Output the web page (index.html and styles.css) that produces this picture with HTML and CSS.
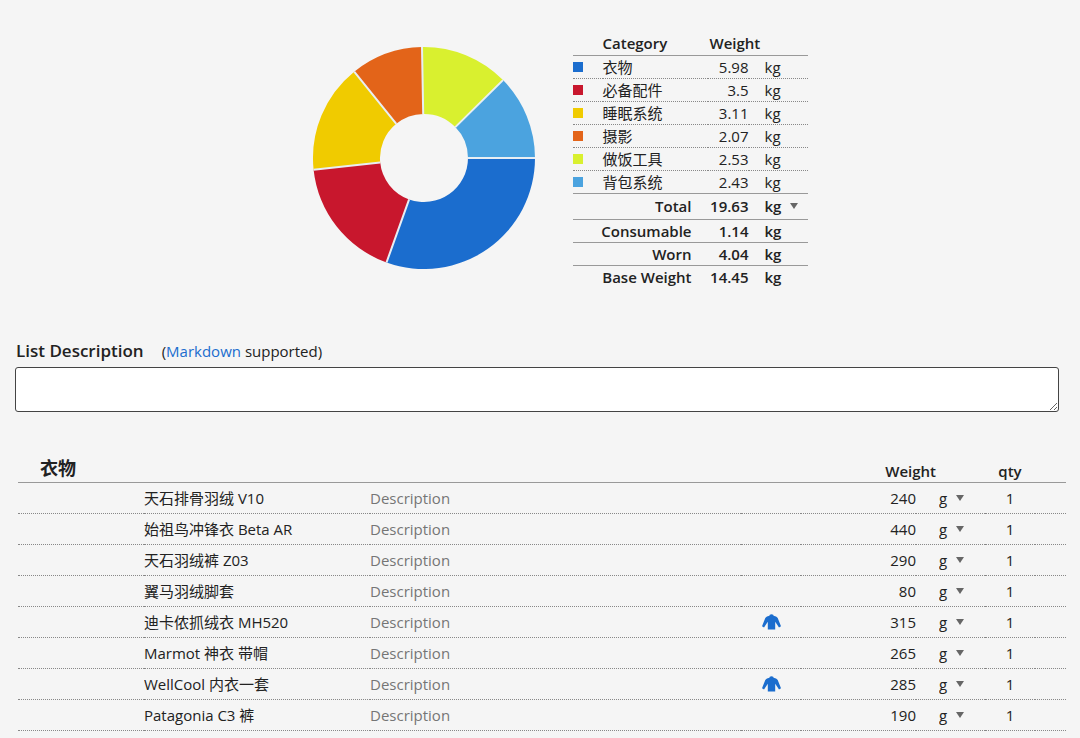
FILE: index.html
```
<!DOCTYPE html>
<html lang="zh-CN">
<head>
    <meta charset="utf-8">
    <title>衣物</title>
    <meta name="viewport" content="width=device-width, initial-scale=1">
    <link rel="stylesheet" href="styles.css">
</head>
<body>
<svg width="0" height="0" class="defs" aria-hidden="true">
    <symbol id="shirt" viewBox="0 0 19 16">
        <path d="M7.8.8Q9.5-.3 11.2.8L11.6 1.7 14 2.5Q15.1 3 15.7 4.1L19 12.3 17 13.6 13.2 7.8V15.5H5.8V7.8L2 13.6 0 12.3 3.3 4.1Q3.9 3 5 2.5L7.4 1.7Z"/>
    </symbol>
</svg>
<div class="summary">
    <svg class="chart" width="224" height="224" viewBox="0 0 224 224" role="img" aria-label="Weight by category">
        <path fill="#1b6dce" d="M223 112A111 111 0 0 1 74.5 216.5L97.1 153.4A44 44 0 0 0 156 112Z"/>
        <path fill="#c8172d" d="M74.5 216.5A111 111 0 0 1 1.6 123.7L68.2 116.6A44 44 0 0 0 97.1 153.4Z"/>
        <path fill="#f0cb00" d="M1.6 123.7A111 111 0 0 1 42.2 25.7L84.3 77.8A44 44 0 0 0 68.2 116.6Z"/>
        <path fill="#e36419" d="M42.2 25.7A111 111 0 0 1 110 1L111.2 68A44 44 0 0 0 84.3 77.8Z"/>
        <path fill="#d9f02f" d="M110 1A111 111 0 0 1 191 34.1L143.3 81.1A44 44 0 0 0 111.2 68Z"/>
        <path fill="#4ba3df" d="M191 34.1A111 111 0 0 1 223 112L156 112A44 44 0 0 0 143.3 81.1Z"/>
        <path class="gaps" d="M223 112H156M74.5 216.5L97.1 153.4M1.6 123.7L68.2 116.6M42.2 25.7L84.3 77.8M110 1L111.2 68M191 34.1L143.3 81.1"/>
    </svg>
    <table class="totals">
        <colgroup>
            <col class="c-key"><col><col class="c-num"><col class="c-kg">
        </colgroup>
        <thead>
        <tr><th></th><th>Category</th><th colspan="2" class="head">Weight</th></tr>
        </thead>
        <tbody>
        <tr><td><span class="swatch blue"></span></td><td>衣物</td><td class="num">5.98</td><td class="unit">kg</td></tr>
        <tr><td><span class="swatch red"></span></td><td>必备配件</td><td class="num">3.5</td><td class="unit">kg</td></tr>
        <tr><td><span class="swatch yellow"></span></td><td>睡眠系统</td><td class="num">3.11</td><td class="unit">kg</td></tr>
        <tr><td><span class="swatch orange"></span></td><td>摄影</td><td class="num">2.07</td><td class="unit">kg</td></tr>
        <tr><td><span class="swatch lime"></span></td><td>做饭工具</td><td class="num">2.53</td><td class="unit">kg</td></tr>
        <tr><td><span class="swatch sky"></span></td><td>背包系统</td><td class="num">2.43</td><td class="unit">kg</td></tr>
        </tbody>
        <tfoot>
        <tr class="total"><th colspan="2">Total</th><td class="num">19.63</td><td class="unit"><span class="picker"><select aria-label="Total unit"><option>kg</option></select></span></td></tr>
        <tr><th colspan="2">Consumable</th><td class="num">1.14</td><td class="unit">kg</td></tr>
        <tr><th colspan="2">Worn</th><td class="num">4.04</td><td class="unit">kg</td></tr>
        <tr><th colspan="2">Base Weight</th><td class="num">14.45</td><td class="unit">kg</td></tr>
        </tfoot>
    </table>
</div>

<div class="description">
    <div class="caption">
        <label for="list-description">List Description</label>
        <span>(<a href="#markdown">Markdown</a> supported)</span>
    </div>
    <textarea id="list-description"></textarea>
</div>

<table class="items">
    <colgroup>
        <col class="c-handle"><col class="c-name"><col><col class="c-worn"><col class="c-weight"><col class="c-unit"><col class="c-qty"><col class="c-end">
    </colgroup>
    <thead>
    <tr><th colspan="4"><h2>衣物</h2></th><th colspan="2" class="weight">Weight</th><th class="qty">qty</th><th></th></tr>
    </thead>
    <tbody>
    <tr>
        <td></td>
        <td><input type="text" aria-label="Name" value="天石排骨羽绒 V10"></td>
        <td><input type="text" aria-label="Description" placeholder="Description"></td>
        <td></td>
        <td><input type="text" class="right" aria-label="Weight" value="240"></td>
        <td><span class="picker"><select aria-label="Unit"><option>g</option></select></span></td>
        <td><input type="text" class="center" aria-label="qty" value="1"></td>
        <td></td>
    </tr>
    <tr>
        <td></td>
        <td><input type="text" aria-label="Name" value="始祖鸟冲锋衣 Beta AR"></td>
        <td><input type="text" aria-label="Description" placeholder="Description"></td>
        <td></td>
        <td><input type="text" class="right" aria-label="Weight" value="440"></td>
        <td><span class="picker"><select aria-label="Unit"><option>g</option></select></span></td>
        <td><input type="text" class="center" aria-label="qty" value="1"></td>
        <td></td>
    </tr>
    <tr>
        <td></td>
        <td><input type="text" aria-label="Name" value="天石羽绒裤 Z03"></td>
        <td><input type="text" aria-label="Description" placeholder="Description"></td>
        <td></td>
        <td><input type="text" class="right" aria-label="Weight" value="290"></td>
        <td><span class="picker"><select aria-label="Unit"><option>g</option></select></span></td>
        <td><input type="text" class="center" aria-label="qty" value="1"></td>
        <td></td>
    </tr>
    <tr>
        <td></td>
        <td><input type="text" aria-label="Name" value="翼马羽绒脚套"></td>
        <td><input type="text" aria-label="Description" placeholder="Description"></td>
        <td></td>
        <td><input type="text" class="right" aria-label="Weight" value="80"></td>
        <td><span class="picker"><select aria-label="Unit"><option>g</option></select></span></td>
        <td><input type="text" class="center" aria-label="qty" value="1"></td>
        <td></td>
    </tr>
    <tr>
        <td></td>
        <td><input type="text" aria-label="Name" value="迪卡侬抓绒衣 MH520"></td>
        <td><input type="text" aria-label="Description" placeholder="Description"></td>
        <td><button type="button" class="worn" aria-label="Worn"><svg width="19" height="16"><use href="#shirt"/></svg></button></td>
        <td><input type="text" class="right" aria-label="Weight" value="315"></td>
        <td><span class="picker"><select aria-label="Unit"><option>g</option></select></span></td>
        <td><input type="text" class="center" aria-label="qty" value="1"></td>
        <td></td>
    </tr>
    <tr>
        <td></td>
        <td><input type="text" aria-label="Name" value="Marmot 神衣 带帽"></td>
        <td><input type="text" aria-label="Description" placeholder="Description"></td>
        <td></td>
        <td><input type="text" class="right" aria-label="Weight" value="265"></td>
        <td><span class="picker"><select aria-label="Unit"><option>g</option></select></span></td>
        <td><input type="text" class="center" aria-label="qty" value="1"></td>
        <td></td>
    </tr>
    <tr>
        <td></td>
        <td><input type="text" aria-label="Name" value="WellCool 内衣一套"></td>
        <td><input type="text" aria-label="Description" placeholder="Description"></td>
        <td><button type="button" class="worn" aria-label="Worn"><svg width="19" height="16"><use href="#shirt"/></svg></button></td>
        <td><input type="text" class="right" aria-label="Weight" value="285"></td>
        <td><span class="picker"><select aria-label="Unit"><option>g</option></select></span></td>
        <td><input type="text" class="center" aria-label="qty" value="1"></td>
        <td></td>
    </tr>
    <tr>
        <td></td>
        <td><input type="text" aria-label="Name" value="Patagonia C3 裤"></td>
        <td><input type="text" aria-label="Description" placeholder="Description"></td>
        <td></td>
        <td><input type="text" class="right" aria-label="Weight" value="190"></td>
        <td><span class="picker"><select aria-label="Unit"><option>g</option></select></span></td>
        <td><input type="text" class="center" aria-label="qty" value="1"></td>
        <td></td>
    </tr>
    <tr>
        <td></td>
        <td></td>
        <td></td>
        <td><button type="button" class="worn" aria-label="Worn"><svg width="19" height="16"><use href="#shirt"/></svg></button></td>
        <td></td>
        <td></td>
        <td></td>
        <td></td>
    </tr>
    </tbody>
</table>
</body>
</html>
```
FILE: styles.css
```
* { box-sizing: border-box; }
html { height: 100%; }
body {
    height: 100%;
    margin: 0;
    overflow: hidden;
    background: #f5f5f5;
    color: #222;
    font: 15px/22px "Open Sans", "Noto Sans CJK SC", sans-serif;
}
input, select, textarea, button { font: inherit; color: inherit; }
a { color: #1b6dce; text-decoration: none; }
table { border-collapse: collapse; table-layout: fixed; }
th, td { padding: 0; text-align: left; }
th { font-weight: 600; }
.defs { display: block; }

/* chart and totals */
.summary {
    display: flex;
    justify-content: center;
    align-items: flex-start;
    gap: 37px;
    padding: 32px 0 0 39px;
}
.chart { margin-top: 14px; }
.gaps { fill: none; stroke: #e8eef3; stroke-width: 2; }
.totals { width: 235px; }
.totals tr { height: 23px; border-bottom: 1px dotted #888; }
.totals thead tr,
.totals tbody tr:last-child,
.totals tfoot tr { border-bottom: 1px solid #999; }
.totals tfoot tr:last-child { border-bottom: 0; }
.totals tfoot { font-weight: 600; }
.totals tfoot th { padding-right: 16px; text-align: right; }
.totals tfoot th,
.totals tfoot td { vertical-align: top; }
.totals .total { height: 26px; }
.totals .total th,
.totals .total td { vertical-align: middle; }
.totals .head { padding-left: 2px; }
.totals .num { text-align: right; }
.totals .unit { padding-left: 16px; }
.c-key { width: 30px; }
.c-num { width: 41px; }
.c-kg { width: 59px; }
.swatch { display: block; width: 10px; height: 10px; }
.blue { background: #1b6dce; }
.red { background: #c8172d; }
.yellow { background: #f0cb00; }
.orange { background: #e36419; }
.lime { background: #d9f02f; }
.sky { background: #4ba3df; }

/* unit drop-down */
.picker { display: flex; align-items: center; gap: 8px; }
.picker select {
    appearance: none;
    padding: 0;
    border: 0;
    background: none;
}
.picker:after {
    content: "";
    border: 4px solid transparent;
    border-top: 6px solid #666;
    border-bottom: 0;
}

/* list description */
.description { padding: 52px 21px 0 15px; }
.caption { display: flex; align-items: baseline; gap: 18px; padding-left: 1px; }
.caption label { font-size: 17px; font-weight: 600; }
.description textarea {
    display: block;
    width: 100%;
    height: 45px;
    margin-top: 5px;
    border: 1px solid #444;
    border-radius: 3px;
    background: #fff;
}

/* items */
.items { width: calc(100% - 32px); margin: 41px 14px 0 18px; }
.items tr { height: 31px; border-bottom: 1px dotted #888; }
.items thead tr { height: 29px; border-bottom: 1px solid #999; }
.items thead th { vertical-align: bottom; }
.items h2 { margin: 0 0 3px 22px; font-size: 18px; line-height: 22px; }
.items .weight { padding-right: 49px; text-align: right; }
.items .qty { text-align: center; }
.items input {
    display: block;
    width: 100%;
    height: 22px;
    padding: 0;
    border: 0;
    background: none;
}
.items input::placeholder { color: #757575; }
.items .right { text-align: right; }
.items .center { text-align: center; }
.items .picker { padding-left: 23px; }
.c-handle { width: 126px; }
.c-name { width: 226px; }
.c-worn { width: 60px; }
.c-weight { width: 115px; }
.c-unit { width: 69px; }
.c-qty { width: 50px; }
.c-end { width: 31px; }
.worn {
    display: flex;
    margin: 0 auto;
    padding: 0;
    border: 0;
    background: none;
}
.worn svg { fill: #1b6dce; }
```
